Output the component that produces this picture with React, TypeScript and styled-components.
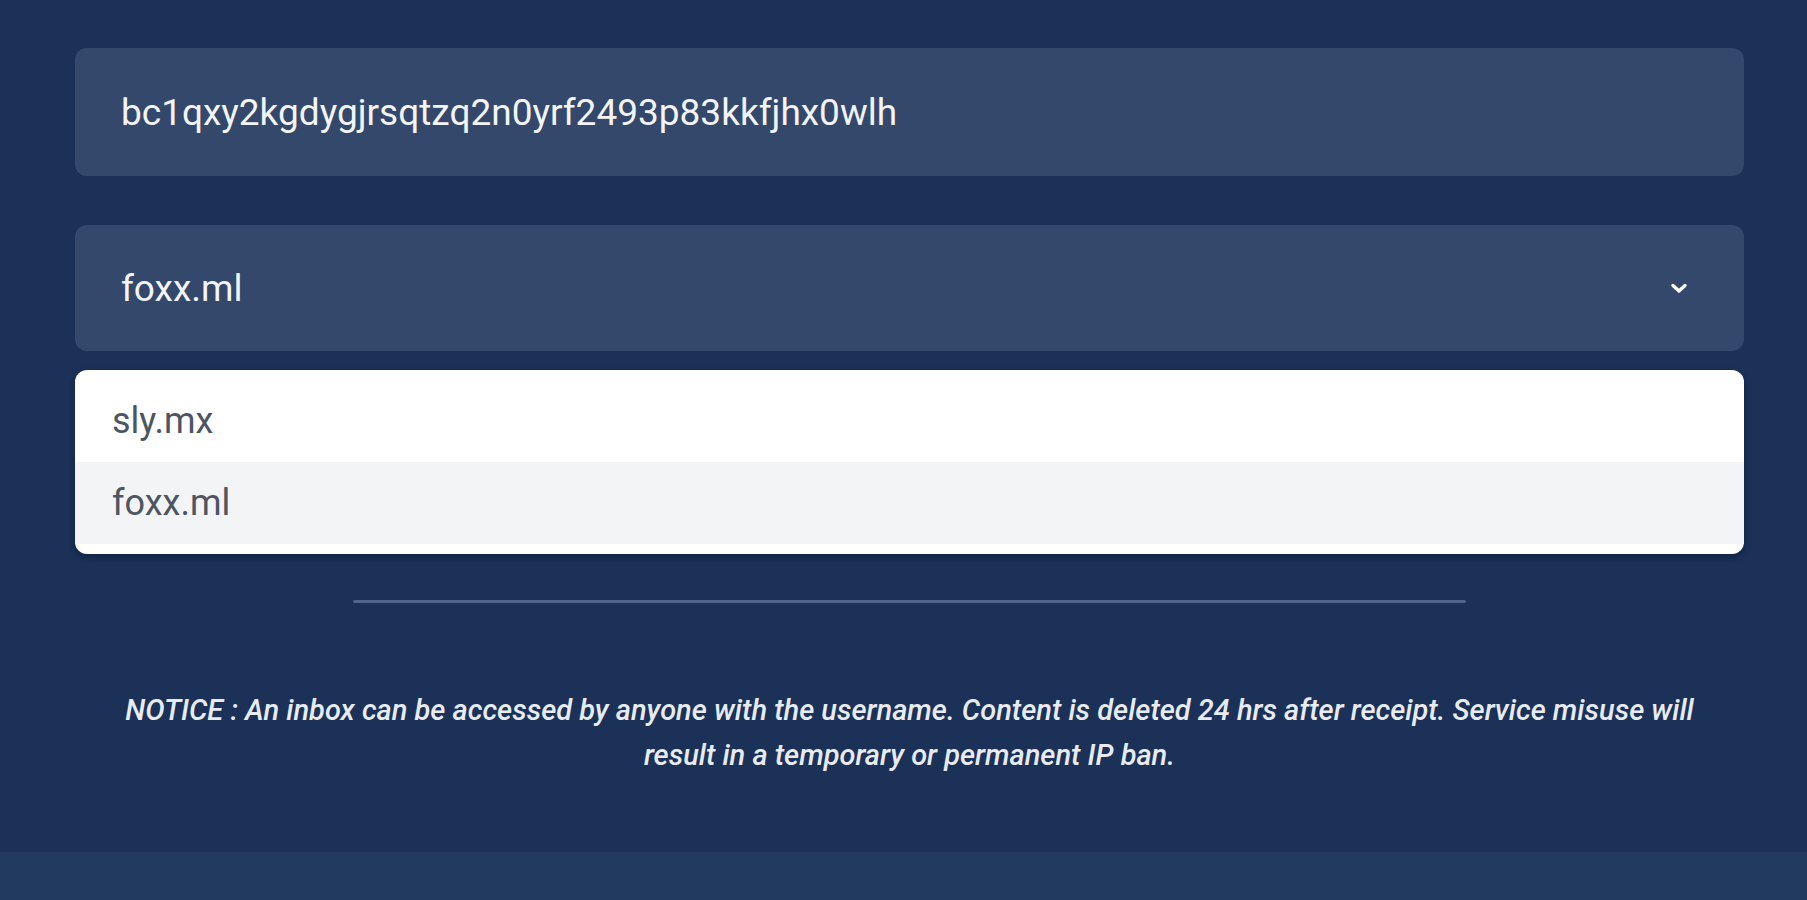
import React from "react";
import styled, { createGlobalStyle } from "styled-components";

const Global = createGlobalStyle`
  html, body { margin: 0; padding: 0; background: #1b3158; }
  body { font-family: Roboto, "Liberation Sans", Arial, sans-serif; }
  * { box-sizing: border-box; }
`;

const Page = styled.div`
  min-height: 900px;
  display: flex;
  flex-direction: column;
  background: #1b3158;
`;

const Main = styled.main`
  width: 1669px;
  margin-left: 75px;
  padding-top: 48px;
  display: flex;
  flex-direction: column;
  height: 852px;
`;

const Field = styled.div<{ $h: number }>`
  height: ${(p) => p.$h}px;
  background: #34486b;
  border-radius: 12px;
  display: flex;
  align-items: center;
  justify-content: space-between;
  padding: 0 56px 0 46px;
  color: #f3f4f6;
  font-size: 37px;
  font-weight: 400;
`;

const SelectField = styled(Field)`
  margin-top: 49px;
`;

const Chevron = styled.svg`
  width: 18px;
  height: 12px;
  display: block;
`;

const Menu = styled.ul`
  list-style: none;
  margin: 19px 0 0;
  padding: 10px 0;
  background: #ffffff;
  border-radius: 12px;
  box-shadow: 0 3px 6px rgba(5, 15, 35, 0.45);
  overflow: hidden;
`;

const Option = styled.li<{ $active?: boolean }>`
  height: 82px;
  display: flex;
  align-items: center;
  padding-left: 37px;
  font-size: 36px;
  color: #4b5563;
  background: ${(p) => (p.$active ? "#f3f4f6" : "#ffffff")};
`;

const Divider = styled.hr`
  width: 66.67%;
  margin: 46px auto 0;
  border: none;
  height: 3px;
  border-radius: 2px;
  background: #4f6589;
`;

const Notice = styled.p`
  margin: 85px 0 0;
  padding: 0 30px;
  text-align: center;
  font-style: italic;
  font-weight: 500;
  font-size: 29px;
  line-height: 45px;
  color: #e8ebf0;
`;

const Footer = styled.footer`
  flex: 1;
  background: #233a5f;
  min-height: 48px;
`;

export default function App() {
  return (
    <Page>
      <Global />
      <Main>
        <Field $h={128}>bc1qxy2kgdygjrsqtzq2n0yrf2493p83kkfjhx0wlh</Field>
        <SelectField $h={126}>
          <span>foxx.ml</span>
          <Chevron viewBox="0 0 18 12" fill="none">
            <path d="M3 3.5 L9 9 L15 3.5" stroke="#ffffff" strokeWidth="3.4" strokeLinecap="round" strokeLinejoin="round" />
          </Chevron>
        </SelectField>
        <Menu>
          <Option>sly.mx</Option>
          <Option $active>foxx.ml</Option>
        </Menu>
        <Divider />
        <Notice>
          NOTICE : An inbox can be accessed by anyone with the username. Content is deleted 24 hrs after receipt. Service misuse will result in a temporary or permanent IP ban.
        </Notice>
      </Main>
      <Footer />
    </Page>
  );
}
